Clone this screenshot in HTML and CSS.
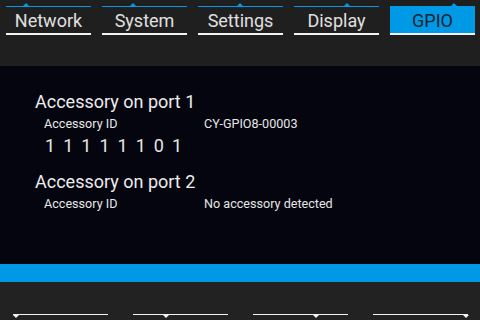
FILE: index.html
```html
<!doctype html>
<html lang="en">
  <head>
    <meta charset="UTF-8" />
    <meta name="viewport" content="width=device-width, initial-scale=1.0" />
    <title>GPIO</title>
    <link rel="stylesheet" href="styles.css">
  </head>
  <body>
    <div class="header">
      <div class="tab" style="--pos: 20px"><div class="tab-label">Network</div></div>
      <div class="tab" style="--pos: 31px"><div class="tab-label">System</div></div>
      <div class="tab" style="--pos: 42px"><div class="tab-label">Settings</div></div>
      <div class="tab" style="--pos: 53px"><div class="tab-label">Display</div></div>
      <div class="tab active" style="--pos: 64px"><div class="tab-label">GPIO</div></div>
    </div>

    <div class="content">
      <div class="port">
        <h2>Accessory on port 1</h2>
        <div class="row">
          <span class="label">Accessory ID</span>
          <span class="value">CY-GPIO8-00003</span>
        </div>
        <div class="bits">
          <span>1</span><span>1</span><span>1</span><span>1</span>
          <span>1</span><span>1</span><span>0</span><span>1</span>
        </div>
      </div>
      <div class="port">
        <h2>Accessory on port 2</h2>
        <div class="row">
          <span class="label">Accessory ID</span>
          <span class="value">No accessory detected</span>
        </div>
      </div>
    </div>

    <div class="bar"></div>

    <div class="footer">
      <div class="slider" style="--pos: 2.5px"></div>
      <div class="slider" style="--pos: 32.5px"></div>
      <div class="slider" style="--pos: 63px"></div>
      <div class="slider" style="--pos: 92.5px"></div>
    </div>
  </body>
</html>
```

FILE: styles.css
```css
body {
  margin: 0;
  width: 480px;
  height: 320px;
  overflow: hidden;
  font-family: Roboto, "Liberation Sans", sans-serif;
  color: #e6e6e6;
  background-color: #222;
}

.header {
  height: 66px;
  box-sizing: border-box;
  padding: 6px 0 0 6px;
  display: flex;
  gap: 11px;
  background-color: #1f1f1f;
}

.tab {
  position: relative;
  width: 85px;
  height: 29px;
  border-top: 1px solid #0099e6;
  border-bottom: 2px solid #f2f2f2;
  box-sizing: border-box;
}

.tab::before {
  content: "";
  position: absolute;
  top: -4px;
  left: calc(var(--pos) - 3px);
  border-left: 3px solid transparent;
  border-right: 3px solid transparent;
  border-bottom: 3px solid #0099e6;
}

.tab-label {
  height: 26px;
  display: flex;
  align-items: center;
  justify-content: center;
  font-size: 18px;
  color: #e0e0e0;
}

.tab.active .tab-label {
  background-color: #0099e6;
  color: #13222f;
}

.content {
  height: 198px;
  box-sizing: border-box;
  padding: 25px 0 0 35px;
  background-color: #05050f;
}

.port {
  margin-bottom: 15px;
}

h2 {
  margin: 0;
  font-size: 18px;
  font-weight: normal;
  line-height: 21px;
  color: #ececec;
}

.row {
  display: flex;
  margin-top: 5px;
  padding-left: 9px;
  font-size: 12.6px;
  line-height: 14px;
}

.label {
  width: 160px;
}

.bits {
  display: flex;
  gap: 8px;
  margin-top: 4px;
  padding-left: 10px;
  font-size: 18px;
  line-height: 21px;
}

.bar {
  height: 18px;
  background-color: #0099e6;
}

.footer {
  height: 38px;
  box-sizing: border-box;
  padding: 32px 0 0 13px;
  display: flex;
  gap: 25px;
  background-color: #222;
}

.slider {
  position: relative;
  width: 95px;
  height: 0;
  border-top: 1px solid #f2f2f2;
}

.slider::after {
  content: "";
  position: absolute;
  top: 0;
  left: calc(var(--pos) - 3px);
  border-left: 3px solid transparent;
  border-right: 3px solid transparent;
  border-top: 3px solid #f2f2f2;
}
```
